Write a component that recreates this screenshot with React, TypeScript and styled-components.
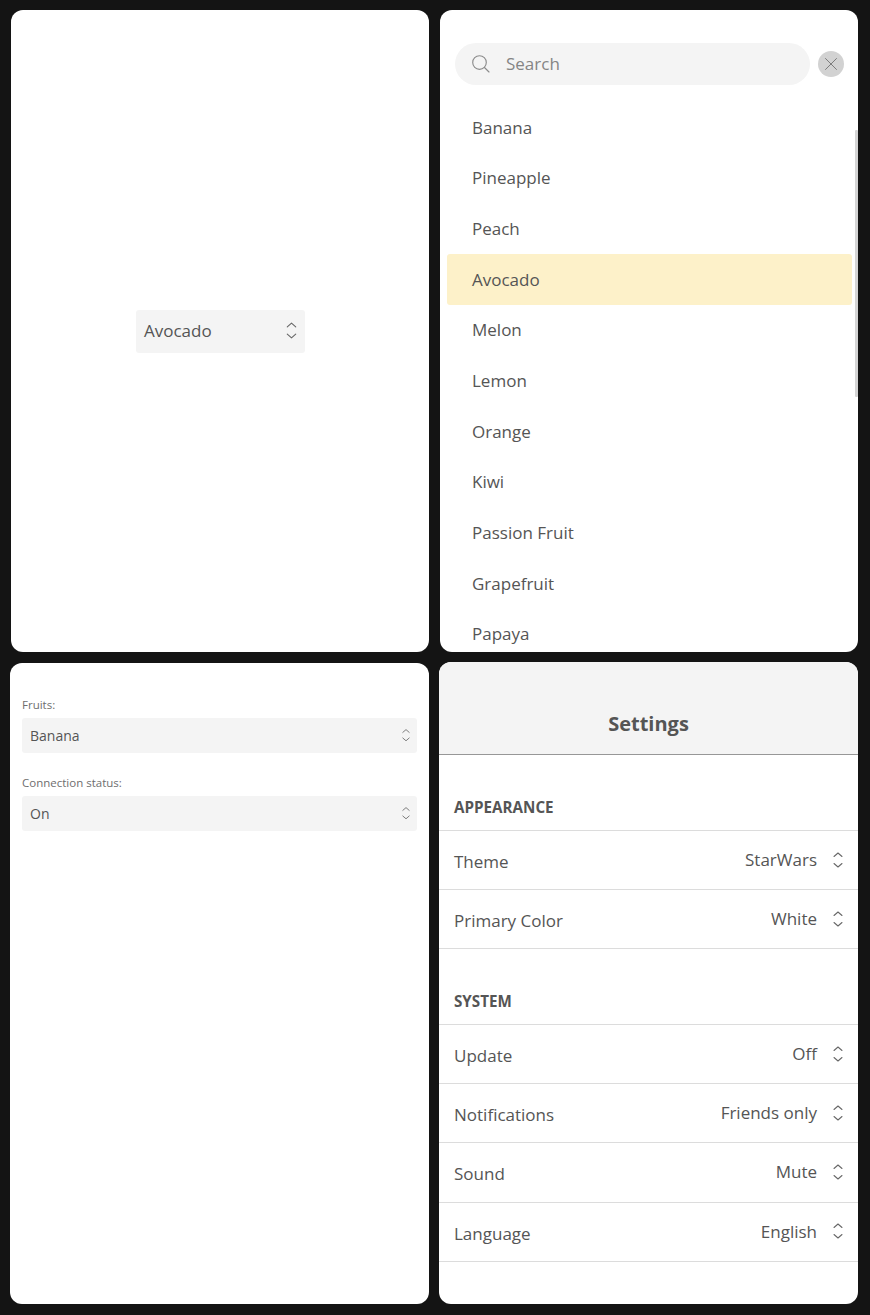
import React from "react";
import styled, { createGlobalStyle } from "styled-components";

const Global = createGlobalStyle`
  html, body { margin: 0; padding: 0; background: #141414; }
  body { font-family: "Open Sans", "Liberation Sans", sans-serif; color: #555; }
`;

const Page = styled.div`
  width: 870px;
  height: 1315px;
  box-sizing: border-box;
  padding: 10px 12px 11px 10px;
  display: grid;
  grid-template-columns: 419px 419px;
  grid-template-rows: 642px 642px;
  column-gap: 10px;
  row-gap: 10px;
  overflow: hidden;
`;

const Panel = styled.section<{ $inset?: boolean }>`
  position: relative;
  background: #fff;
  border-radius: 12px;
  overflow: hidden;
  margin-left: ${(p) => (p.$inset ? "1px" : "0")};
  display: flex;
  flex-direction: column;
  min-width: 0;
`;

const CenterPanel = styled(Panel)`
  align-items: center;
  justify-content: center;
`;

const BigSelect = styled.div`
  width: 169px;
  height: 43px;
  box-sizing: border-box;
  padding: 0 8px 1px;
  background: #f4f4f4;
  border-radius: 3px;
  display: flex;
  align-items: center;
  justify-content: space-between;
  font-size: 17px;
  margin-left: 1px;
`;

const SearchRow = styled.div`
  display: flex;
  align-items: center;
  gap: 8px;
  padding: 33px 14px 0 15px;
  flex: none;
`;

const SearchBox = styled.div`
  flex: 1;
  height: 42px;
  box-sizing: border-box;
  border-radius: 21px;
  background: #f4f4f4;
  display: flex;
  align-items: center;
  gap: 15px;
  padding: 0 0 1px 16px;
  color: #858585;
  font-size: 17px;
`;

const CloseButton = styled.div`
  width: 26px;
  height: 26px;
  border-radius: 50%;
  background: #d2d2d2;
  display: flex;
  align-items: center;
  justify-content: center;
  flex: none;
`;

const FruitList = styled.ul`
  list-style: none;
  margin: 17px 6px 0 7px;
  padding: 0;
  flex: 1;
  min-height: 0;
  overflow: hidden;
`;

const FruitItem = styled.li<{ $selected?: boolean }>`
  height: 50.67px;
  box-sizing: border-box;
  padding-left: 25px;
  display: flex;
  align-items: center;
  font-size: 17px;
  border-radius: 3px;
  background: ${(p) => (p.$selected ? "#fdf1c9" : "transparent")};
`;

const ScrollThumb = styled.div`
  position: absolute;
  right: 0;
  top: 120px;
  width: 3.5px;
  height: 267px;
  border-radius: 1px;
  background: #d4d4d4;
`;

const FormPanel = styled(Panel)`
  margin-top: 1px;
  padding: 34px 12px 0;
`;

const FieldLabel = styled.label`
  display: block;
  font-size: 11.5px;
  line-height: 15px;
  color: #6e6e6e;
  margin-bottom: 6px;
`;

const Field = styled.div`
  margin-bottom: 21.6px;
`;

const SmallSelect = styled.div`
  height: 35px;
  box-sizing: border-box;
  padding: 0 7.5px 0 8px;
  background: #f4f4f4;
  border-radius: 3px;
  display: flex;
  align-items: center;
  justify-content: space-between;
  font-size: 14px;
`;

const SettingsHeader = styled.header`
  height: 93px;
  box-sizing: border-box;
  background: #f4f4f4;
  border-bottom: 1px solid #979797;
  display: flex;
  align-items: flex-end;
  justify-content: center;
  padding-bottom: 16px;
  font-size: 20px;
  line-height: 29px;
  font-weight: 700;
  flex: none;
`;

const SectionTitle = styled.h2<{ $first?: boolean }>`
  margin: 0;
  height: ${(p) => (p.$first ? "76px" : "75.6px")};
  box-sizing: border-box;
  padding: 0 15px 13px;
  display: flex;
  align-items: flex-end;
  font-size: 15.2px;
  line-height: 20px;
  font-weight: 700;
  border-bottom: 1px solid #dcdcdc;
`;

const SettingRow = styled.div`
  height: 59.2px;
  box-sizing: border-box;
  border-bottom: 1px solid #dcdcdc;
  padding: 0 15px;
  display: flex;
  align-items: center;
  justify-content: space-between;
  font-size: 17px;
`;

const RowLabel = styled.span`
  padding-top: 3px;
`;

const RowValue = styled.span`
  display: flex;
  align-items: center;
  gap: 16px;
  margin-bottom: 1px;
`;

const Chevrons = ({ w = 10, h = 18 }: { w?: number; h?: number }) => (
  <svg width={w} height={h} viewBox="0 0 10 18" fill="none" stroke="#666" strokeWidth="1.05" strokeLinecap="round" strokeLinejoin="round" style={{ flex: "none" }}>
    <path d="M1 5.5 5 2l4 3.5" />
    <path d="M1 12.5 5 16l4-3.5" />
  </svg>
);

const SearchIcon = () => (
  <svg width="20" height="20" viewBox="0 0 20 20" fill="none" stroke="#8c8c8c" strokeWidth="1.15" strokeLinecap="round" style={{ flex: "none" }}>
    <circle cx="8.5" cy="8.5" r="6.8" />
    <path d="M13.5 13.5 18 18" />
  </svg>
);

const CloseIcon = () => (
  <svg width="14" height="14" viewBox="0 0 14 14" fill="none" stroke="#777" strokeWidth="0.95" strokeLinecap="round">
    <path d="M1.5 1.5l11 11M12.5 1.5l-11 11" />
  </svg>
);

const fruits = ["Banana", "Pineapple", "Peach", "Avocado", "Melon", "Lemon", "Orange", "Kiwi", "Passion Fruit", "Grapefruit", "Papaya"];

const appearance = [
  ["Theme", "StarWars"],
  ["Primary Color", "White"],
];
const system = [
  ["Update", "Off"],
  ["Notifications", "Friends only"],
  ["Sound", "Mute"],
  ["Language", "English"],
];

const Row = ({ label, value }: { label: string; value: string }) => (
  <SettingRow>
    <RowLabel>{label}</RowLabel>
    <RowValue>
      {value}
      <Chevrons />
    </RowValue>
  </SettingRow>
);

export default function App() {
  return (
    <>
      <Global />
      <Page>
        <CenterPanel $inset>
          <BigSelect>
            Avocado
            <Chevrons w={11} h={19} />
          </BigSelect>
        </CenterPanel>
        <Panel $inset>
          <SearchRow>
            <SearchBox>
              <SearchIcon />
              Search
            </SearchBox>
            <CloseButton>
              <CloseIcon />
            </CloseButton>
          </SearchRow>
          <FruitList>
            {fruits.map((f) => (
              <FruitItem key={f} $selected={f === "Avocado"}>
                {f}
              </FruitItem>
            ))}
          </FruitList>
          <ScrollThumb />
        </Panel>
        <FormPanel>
          <Field>
            <FieldLabel>Fruits:</FieldLabel>
            <SmallSelect>
              Banana
              <Chevrons w={8} h={14.4} />
            </SmallSelect>
          </Field>
          <Field>
            <FieldLabel>Connection status:</FieldLabel>
            <SmallSelect>
              On
              <Chevrons w={8} h={14.4} />
            </SmallSelect>
          </Field>
        </FormPanel>
        <Panel>
          <SettingsHeader>Settings</SettingsHeader>
          <SectionTitle $first>APPEARANCE</SectionTitle>
          {appearance.map(([l, v]) => (
            <Row key={l} label={l} value={v} />
          ))}
          <SectionTitle>SYSTEM</SectionTitle>
          {system.map(([l, v]) => (
            <Row key={l} label={l} value={v} />
          ))}
        </Panel>
      </Page>
    </>
  );
}
